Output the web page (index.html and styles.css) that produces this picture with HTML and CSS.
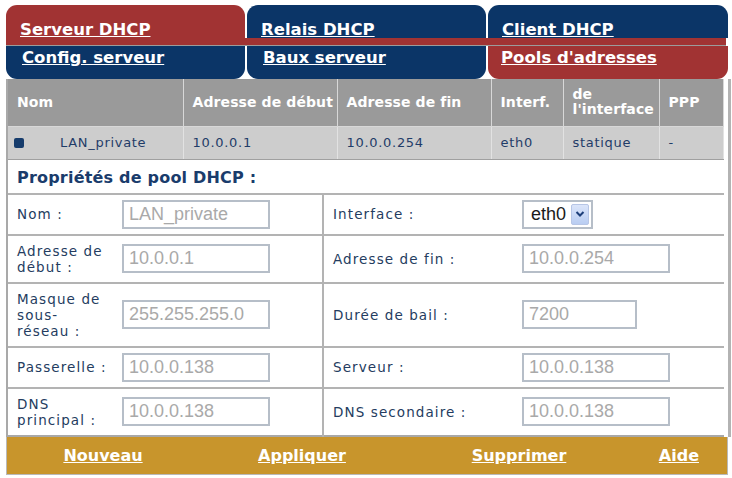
FILE: index.html
```html
<!DOCTYPE html>
<html lang="fr">
<head>
  <meta charset="UTF-8">
  <title>Serveur DHCP – Pools d'adresses</title>
  <link rel="stylesheet" href="styles.css">
</head>
<body>

<div class="page">
  <div class="tabs-main">
    <a class="tab tab-red" href="#">Serveur DHCP</a>
    <a class="tab" href="#">Relais DHCP</a>
    <a class="tab" href="#">Client DHCP</a>
  </div>
  <div class="tabs-band"></div>
  <div class="tabs-sub">
    <a class="subtab" href="#">Config. serveur</a>
    <a class="subtab" href="#">Baux serveur</a>
    <a class="subtab subtab-red" href="#">Pools d'adresses</a>
  </div>

  <div class="panel">
    <table class="pools">
      <tr>
        <th class="c-name">Nom</th>
        <th class="c-start">Adresse de début</th>
        <th class="c-end">Adresse de fin</th>
        <th class="c-if">Interf.</th>
        <th class="c-type">de l'interface</th>
        <th class="c-ppp">PPP</th>
      </tr>
      <tr>
        <td><span class="bullet"></span>LAN_private</td>
        <td>10.0.0.1</td>
        <td>10.0.0.254</td>
        <td>eth0</td>
        <td>statique</td>
        <td>-</td>
      </tr>
    </table>

    <h3 class="props-title">Propriétés de pool DHCP :</h3>

    <table class="form">
      <tr>
        <td class="lbl">Nom :</td>
        <td class="fld sep"><input class="txt" type="text" value="LAN_private"></td>
        <td class="lbl lbl-r">Interface :</td>
        <td class="fld">
          <span class="select">eth0<span class="select-btn"><svg width="10" height="8" viewBox="0 0 10 8"><path d="M1.5 2 L5 5.5 L8.5 2" fill="none" stroke="#1d3f7a" stroke-width="2"/></svg></span></span>
        </td>
      </tr>
      <tr>
        <td class="lbl">Adresse de début :</td>
        <td class="fld sep"><input class="txt" type="text" value="10.0.0.1"></td>
        <td class="lbl lbl-r">Adresse de fin :</td>
        <td class="fld"><input class="txt" type="text" value="10.0.0.254"></td>
      </tr>
      <tr>
        <td class="lbl">Masque de sous-<br>réseau :</td>
        <td class="fld sep"><input class="txt" type="text" value="255.255.255.0"></td>
        <td class="lbl lbl-r">Durée de bail :</td>
        <td class="fld"><input class="txt txt-short" type="text" value="7200"></td>
      </tr>
      <tr>
        <td class="lbl">Passerelle :</td>
        <td class="fld sep"><input class="txt" type="text" value="10.0.0.138"></td>
        <td class="lbl lbl-r">Serveur :</td>
        <td class="fld"><input class="txt" type="text" value="10.0.0.138"></td>
      </tr>
      <tr>
        <td class="lbl">DNS principal :</td>
        <td class="fld sep"><input class="txt" type="text" value="10.0.0.138"></td>
        <td class="lbl lbl-r">DNS secondaire :</td>
        <td class="fld"><input class="txt" type="text" value="10.0.0.138"></td>
      </tr>
    </table>
  </div>

  <div class="actions">
    <a href="#">Nouveau</a>
    <a href="#">Appliquer</a>
    <a href="#">Supprimer</a>
    <a href="#">Aide</a>
  </div>
</div>

</body>
</html>
```

FILE: styles.css
```css
* { box-sizing: border-box; margin: 0; padding: 0; }
body { background: #fff; font-family: "DejaVu Sans", Verdana, sans-serif; }

.page {
  width: 726px;
  margin-left: 6px;
  padding-top: 5px;
}

/* onglets principaux */
.tabs-main {
  display: grid;
  grid-template-columns: 239px 239px 240px;
  gap: 2px;
  width: 720px;
}
.tab {
  display: block;
  height: 33px;
  padding: 16px 0 0 14px;
  background: #0b3567;
  border-radius: 11px 11px 0 0;
  color: #fff;
  font-weight: bold;
  font-size: 16.5px;
  line-height: 18px;
}
.tab-red { background: #a13333; }
.tabs-band {
  width: 720px;
  height: 8px;
  background: #a13333;
  border-bottom: 1px solid #9c9c9c;
}

/* sous-onglets */
.tabs-sub {
  display: grid;
  grid-template-columns: 239px 239px 240px;
  gap: 2px;
  width: 720px;
}
.subtab {
  display: block;
  height: 33px;
  padding: 3px 0 0 16px;
  background: #0b3567;
  border-radius: 0 0 11px 11px;
  color: #fff;
  font-weight: bold;
  font-size: 16.5px;
  line-height: 18px;
}
.subtab-red { background: #a13333; padding-left: 13px; }

/* panneau */
.panel {
  width: 725px;
  border-left: 2px solid #a9a9a9;
  border-right: 3px solid #b3b3b3;
  padding-right: 2px;
}

.pools {
  width: 716px;
  table-layout: fixed;
  border-collapse: collapse;
  font-size: 13px;
  letter-spacing: 0.7px;
}
.pools th {
  background: #9a9a9a;
  color: #fff;
  font-size: 14px;
  letter-spacing: 0.1px;
  line-height: 15px;
  text-align: left;
  white-space: nowrap;
  height: 47px;
  padding: 0 9px;
  border: 1px solid #d8d8d8;
  border-top: none;
  border-left: none;
}
.pools .c-type { white-space: normal; padding-right: 4px; }
.pools td {
  background: #cdcdcd;
  color: #1f3c68;
  height: 33px;
  padding: 0 9px;
  border-right: 1px solid #e2e2e2;
  border-bottom: 1px solid #a0a0a0;
}
.pools .c-name { width: 175px; }
.pools .c-start { width: 154px; }
.pools .c-end { width: 154px; }
.pools .c-if { width: 72px; }
.pools .c-type { width: 96px; }
.bullet {
  display: inline-block;
  width: 10px; height: 10px;
  border-radius: 2px;
  background: #163c6c;
  margin: 0 36px 0 -3px;
  vertical-align: -1px;
}

.props-title {
  width: 716px;
  height: 35px;
  padding: 8px 9px 0;
  color: #1a3c6c;
  font-size: 16px;
  line-height: 20px;
  letter-spacing: 0.2px;
  border-bottom: 2px solid #b3b3b3;
}

/* formulaire */
.form {
  width: 716px;
  table-layout: fixed;
  border-collapse: collapse;
}
.form tr { border-bottom: 2px solid #b3b3b3; }
.form tr:last-child { border-bottom: 2px solid #a8a8a8; }
.lbl {
  width: 112px;
  padding: 7px 10px 7px 9px;
  color: #243c60;
  font-size: 13.5px;
  line-height: 16px;
  letter-spacing: 1.1px;
  vertical-align: middle;
}
.lbl-r { width: 197px; }
.fld { padding: 5px 2px; vertical-align: middle; }
.sep { width: 203px; border-right: 2px solid #b3b3b3; }

.txt {
  display: block;
  width: 148px;
  height: 29px;
  padding: 0 5px;
  border: 2px solid #b6bec8;
  background: #fff;
  color: #a9a9a9;
  font-family: "Liberation Sans", Arial, sans-serif;
  font-size: 18px;
}
.txt-short { width: 115px; }

.select {
  display: flex;
  align-items: center;
  width: 71px;
  height: 29px;
  padding: 0 2px 0 7px;
  border: 2px solid #b6bec8;
  color: #1a1a1a;
  font-family: "Liberation Sans", Arial, sans-serif;
  font-size: 18px;
}
.select-btn {
  display: flex;
  align-items: center;
  justify-content: center;
  width: 18px;
  height: 21px;
  margin-left: auto;
  border: 1px solid #b7c6e6;
  border-radius: 2px;
  background: linear-gradient(#dbe5fa, #b9cdf2);
}

/* actions */
.actions {
  display: grid;
  grid-template-columns: 192px 206px 228px 1fr;
  width: 722px;
  height: 38px;
  align-items: center;
  background: #c8952c;
  border: 1px solid #b9b9b9;
  border-top: none;
}
.actions a {
  text-align: center;
  color: #fff;
  font-weight: bold;
  font-size: 16px;
}
.actions a:last-child { text-align: right; padding-right: 28px; }
```
